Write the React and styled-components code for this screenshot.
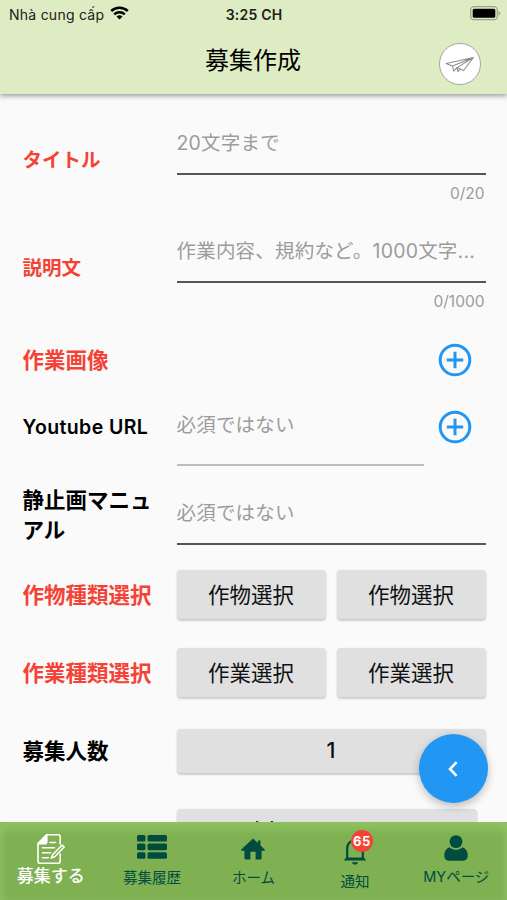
import React from 'react';
import styled, { createGlobalStyle } from 'styled-components';

// Colors //
const headerGreen = '#ddecc3';
const red = '#f44336';
const blue = '#2196f3';
const darkGreen = '#004d40';
const gray = '#9c9c9c';

// Styles //
const GlobalStyle = createGlobalStyle`
  * {
    box-sizing: border-box;
  }
  body {
    margin: 0;
    overflow: hidden;
    background-color: #fafafa;
    font-family: Inter, 'Noto Sans CJK JP', sans-serif;
    color: #000;
  }
`;

const ScreenStyled = styled.div`
  position: relative;
  width: 507px;
  height: 900px;
  display: flex;
  flex-direction: column;
  overflow: hidden;
`;

const HeaderStyled = styled.header`
  height: 94px;
  flex: none;
  background-color: ${headerGreen};
  box-shadow: 0 2px 5px rgba(0, 0, 0, 0.38);
  z-index: 2;
`;

const StatusBarStyled = styled.div`
  height: 28px;
  padding: 0 6px 0 9px;
  display: grid;
  grid-template-columns: 1fr auto 1fr;
  align-items: center;
  font-size: 14px;
  color: #1c2119;
`;

const CarrierStyled = styled.div`
  display: flex;
  align-items: center;
  gap: 6px;
  letter-spacing: 0.25px;
  svg {
    margin-top: -2px;
  }
`;

const ClockStyled = styled.div`
  font-size: 14px;
  font-weight: 600;
  letter-spacing: 0.2px;
  transform: translateX(-1px);
`;

const BatteryStyled = styled.svg`
  justify-self: end;
  margin-top: -2px;
`;

const TitleBarStyled = styled.div`
  height: 66px;
  padding: 2px 26px 0 25px;
  display: grid;
  grid-template-columns: 42px 1fr 42px;
  align-items: center;
`;

const TitleStyled = styled.h1`
  margin: -3px 0 0;
  font-size: 24px;
  font-weight: 400;
  line-height: 36px;
  text-align: center;
`;

const SendButtonStyled = styled.button`
  width: 42px;
  height: 42px;
  margin-top: 3px;
  padding: 0;
  display: flex;
  align-items: center;
  justify-content: center;
  background-color: white;
  border: 1px solid #a3a9a0;
  border-radius: 50%;
`;

const FormStyled = styled.main`
  flex: 1;
  min-height: 0;
  padding: 12px 21.5px 0 22.5px;
  overflow: hidden;
`;

const RowStyled = styled.div`
  height: ${({ height }) => height}px;
  margin-top: ${({ gap }) => gap || 0}px;
  display: grid;
  grid-template-columns: 138px 1fr;
  column-gap: 16px;
  align-items: center;
`;

const LabelStyled = styled.div`
  font-size: ${({ size }) => size || 21.5}px;
  line-height: 30px;
  font-weight: ${({ weight }) => weight || 700};
  letter-spacing: ${({ spacing }) => spacing || 0}px;
  color: ${({ required }) => (required ? red : '#000')};
  white-space: ${({ wrap }) => (wrap ? 'normal' : 'nowrap')};
`;

const FieldStyled = styled.div`
  align-self: start;
  flex: 1;
  padding-top: ${({ top }) => top}px;
  min-width: 0;
`;

const HintStyled = styled.div`
  height: ${({ height }) => height}px;
  border-bottom: 2px solid ${({ muted }) => (muted ? '#bdbdbd' : '#555')};
  font-size: 19.5px;
  line-height: 28px;
  font-weight: 400;
  letter-spacing: 0.2px;
  color: ${gray};
  white-space: nowrap;
`;

const CounterStyled = styled.div`
  padding: 8px 1px 0 0;
  font-size: 15.5px;
  line-height: 22px;
  text-align: right;
  color: ${gray};
`;

const ControlsStyled = styled.div`
  display: flex;
  align-items: center;
  justify-content: ${({ end }) => (end ? 'flex-end' : 'flex-start')};
  align-self: stretch;
  gap: ${({ gap }) => gap || 0}px;
`;

const AddButtonStyled = styled.button`
  width: 34px;
  height: 34px;
  flex: none;
  margin: 0 14px 0 0;
  padding: 0;
  border: 0;
  background: none;
  svg {
    display: block;
  }
`;

const SelectButtonStyled = styled.button`
  flex: 1;
  height: ${({ height }) => height || 49}px;
  margin-right: ${({ inset }) => inset || 0}px;
  padding: 0 0 2px;
  border: 0;
  border-radius: 4px;
  background-color: #e0e0e0;
  box-shadow: 0 2px 2px rgba(0, 0, 0, 0.17), 0 0 2px rgba(0, 0, 0, 0.08);
  font-family: inherit;
  font-size: 21.5px;
  font-weight: ${({ weight }) => weight || 400};
  color: #111;
`;

const DateButtonStyled = styled(SelectButtonStyled)`
  padding: 0 0 5px 78px;
  letter-spacing: 9.5px;
  text-align: left;
`;

const FabStyled = styled.button`
  position: absolute;
  left: 419px;
  top: 734px;
  width: 69px;
  height: 69px;
  padding: 0 1px 0 0;
  display: flex;
  align-items: center;
  justify-content: center;
  border: 0;
  border-radius: 50%;
  background-color: ${blue};
  box-shadow: 0 4px 8px rgba(0, 0, 0, 0.2), 0 1px 12px rgba(0, 0, 0, 0.06);
`;

const TabBarStyled = styled.nav`
  height: 78px;
  flex: none;
  display: grid;
  grid-template-columns: repeat(5, 1fr);
  background-color: #7fb052;
  box-shadow: inset 0 9px 9px -1px #8dc163, inset 5px 0 5px -1px #88bb5e,
    inset -4px 0 5px -1px #88bb5e;
  z-index: 2;
`;

const TabStyled = styled.div`
  display: flex;
  flex-direction: column;
  align-items: center;
  padding-top: ${({ top }) => top}px;
  color: ${({ active }) => (active ? 'white' : darkGreen)};
`;

const TabIconStyled = styled.div`
  position: relative;
  height: 30px;
  display: flex;
  align-items: center;
`;

const TabLabelStyled = styled.div`
  margin-top: ${({ top }) => top || 0}px;
  font-size: ${({ active }) => (active ? 17 : 14.5)}px;
  font-weight: ${({ active }) => (active ? 500 : 400)};
  line-height: 24px;
  white-space: nowrap;
`;

const BadgeStyled = styled.span`
  position: absolute;
  left: 8px;
  top: -6px;
  width: 22px;
  height: 22px;
  border-radius: 50%;
  background-color: ${red};
  color: white;
  font-size: 13px;
  font-weight: 700;
  line-height: 22px;
  letter-spacing: 0.4px;
  text-align: center;
`;

// Icons //
const WifiIcon = () => (
  <svg width="19" height="14" viewBox="0 0 19 14" fill="none" stroke="#000">
    <path d="M1.2 5a12 12 0 0 1 16.6 0" strokeWidth="2.5" />
    <path d="M4.2 8.3a7.7 7.7 0 0 1 10.6 0" strokeWidth="2.4" />
    <path d="M6.5 10.6a4.3 4.3 0 0 1 6 0L9.5 13.6z" fill="#000" stroke="none" />
  </svg>
);

const BatteryIcon = () => (
  <BatteryStyled width="31" height="15" viewBox="0 0 31 15">
    <rect x="0.7" y="0.7" width="26.6" height="13" rx="3.5" fill="none" stroke="#9aa58a" strokeWidth="1.3" />
    <rect x="2.7" y="2.7" width="22.6" height="9" rx="1.5" fill="#000" />
    <path d="M28.6 5v4.6c1-.4 1.7-1.3 1.7-2.3s-.7-1.9-1.7-2.3z" fill="#9aa58a" />
  </BatteryStyled>
);

const PlaneIcon = () => (
  <svg width="30" height="18" viewBox="0 0 30 18" fill="none" stroke="#8f8f8f" strokeWidth="1.1" strokeLinejoin="round">
    <path d="M28.5 2.5L1 8.5l6.5 2.6L28.5 2.5 18.5 15.5 12 12.6 28.5 2.5" />
    <path d="M7.5 11.1l1.3 5 3.2-3.5M12 12.6l1 4 2.4-2.6" />
  </svg>
);

const PlusCircleIcon = () => (
  <svg width="34" height="34" viewBox="0 0 34 34" fill="none" stroke={blue} strokeWidth="3">
    <circle cx="17" cy="17" r="14.8" />
    <path d="M17 8.8v16.4M8.8 17h16.4" />
  </svg>
);

const ChevronIcon = () => (
  <svg width="12" height="16" viewBox="0 0 12 16" fill="none" stroke="white" strokeWidth="2.6">
    <path d="M9.6 1.2L3 8l6.6 6.8" />
  </svg>
);

const NoteIcon = () => (
  <svg width="28" height="30" viewBox="0 0 28 30" fill="none" stroke="currentColor" strokeWidth="1.6" strokeLinejoin="round" strokeLinecap="round">
    <path d="M23.2 10V2.8c0-1.2-.8-2-2-2H9.5L1 9.5v17.7c0 1.2.8 2 2 2h18.2c1.2 0 2-.8 2-2V20" />
    <path d="M9.8.8v7c0 1.2-.8 2-2 2H1z" fill="currentColor" />
    <path d="M13 8.5h5.5M5.5 13.8h12M5.5 18.8h8M5.5 23.8h6" />
    <path d="M25.2 11l2 2-9.5 9.8-3.4 1.3 1.3-3.4z" />
  </svg>
);

const ListIcon = () => (
  <svg width="30" height="24" viewBox="0 0 30 24" fill="currentColor">
    {[0, 8.6, 17.2].map((y) => (
      <g key={y}>
        <rect x="0" y={y} width="8.5" height="6.6" rx="1.6" />
        <rect x="10.5" y={y} width="19.5" height="6.6" rx="1.6" />
      </g>
    ))}
  </svg>
);

const HomeIcon = () => (
  <svg width="24" height="22" viewBox="0 0 24 22" fill="currentColor">
    <path d="M12 .5L16.8 5V2.6h2.7v5L24 11.8l-.5.9h-2.9V20c0 .9-.5 1.4-1.4 1.4h-4.6v-7.6H9.4v7.6H4.8c-.9 0-1.4-.5-1.4-1.4v-7.3H.5l-.5-.9z" />
  </svg>
);

const BellIcon = () => (
  <svg width="24" height="28" viewBox="0 0 24 28" fill="none" stroke="currentColor" strokeWidth="2.2">
    <path d="M4.2 21.5V11a7.8 7.8 0 0 1 15.6 0v10.5" />
    <path d="M12 1v3" />
    <path d="M.6 23.4l2.6-3h17.6l2.6 3z" fill="currentColor" stroke="none" />
    <path d="M9 25.2h6c-.3 1.5-1.3 2.4-3 2.4s-2.7-.9-3-2.4z" fill="currentColor" stroke="none" />
  </svg>
);

const PersonIcon = () => (
  <svg width="24" height="26" viewBox="0 0 24 26" fill="currentColor">
    <circle cx="12" cy="6.6" r="6.4" />
    <path d="M5.4 12.2a9.4 9.4 0 0 0 13.2 0c3.2 1.2 5.2 4.2 5.2 8.4 0 3.3-1.6 5.2-4.6 5.2H4.8c-3 0-4.6-1.9-4.6-5.2 0-4.2 2-7.2 5.2-8.4z" />
  </svg>
);

// Components //
const Header = () => (
  <HeaderStyled>
    <StatusBarStyled>
      <CarrierStyled>
        Nhà cung cấp <WifiIcon />
      </CarrierStyled>
      <ClockStyled>3:25 CH</ClockStyled>
      <BatteryIcon />
    </StatusBarStyled>
    <TitleBarStyled>
      <span />
      <TitleStyled>募集作成</TitleStyled>
      <SendButtonStyled>
        <PlaneIcon />
      </SendButtonStyled>
    </TitleBarStyled>
  </HeaderStyled>
);

const AddButton = () => (
  <AddButtonStyled>
    <PlusCircleIcon />
  </AddButtonStyled>
);

const SelectRow = ({ label, option, gap }) => (
  <RowStyled height={49} gap={gap}>
    <LabelStyled required>{label}</LabelStyled>
    <ControlsStyled gap={11}>
      <SelectButtonStyled>{option}</SelectButtonStyled>
      <SelectButtonStyled>{option}</SelectButtonStyled>
    </ControlsStyled>
  </RowStyled>
);

const Form = () => (
  <FormStyled>
    <RowStyled height={108}>
      <LabelStyled required size={19.5}>タイトル</LabelStyled>
      <FieldStyled top={23}>
        <HintStyled height={46}>20文字まで</HintStyled>
        <CounterStyled>0/20</CounterStyled>
      </FieldStyled>
    </RowStyled>
    <RowStyled height={108}>
      <LabelStyled required size={19.5}>説明文</LabelStyled>
      <FieldStyled top={23}>
        <HintStyled height={46}>作業内容、規約など。1000文字...</HintStyled>
        <CounterStyled>0/1000</CounterStyled>
      </FieldStyled>
    </RowStyled>
    <RowStyled height={56} gap={10}>
      <LabelStyled required>作業画像</LabelStyled>
      <ControlsStyled end>
        <AddButton />
      </ControlsStyled>
    </RowStyled>
    <RowStyled height={78}>
      <LabelStyled size={19.5} weight={600} spacing={0.4}>Youtube URL</LabelStyled>
      <ControlsStyled gap={14}>
        <FieldStyled top={23}>
          <HintStyled height={55} muted>必須ではない</HintStyled>
        </FieldStyled>
        <AddButton />
      </ControlsStyled>
    </RowStyled>
    <RowStyled height={98}>
      <LabelStyled wrap="true">静止画マニュアル</LabelStyled>
      <FieldStyled top={33}>
        <HintStyled height={46}>必須ではない</HintStyled>
      </FieldStyled>
    </RowStyled>
    <SelectRow label="作物種類選択" option="作物選択" gap={6} />
    <SelectRow label="作業種類選択" option="作業選択" gap={29} />
    <RowStyled height={44} gap={32}>
      <LabelStyled>募集人数</LabelStyled>
      <SelectButtonStyled height={44} weight={500}>1</SelectButtonStyled>
    </RowStyled>
    <RowStyled height={44} gap={36}>
      <span />
      <DateButtonStyled height={44} inset={9}>ll</DateButtonStyled>
    </RowStyled>
  </FormStyled>
);

const TabBar = () => (
  <TabBarStyled>
    <TabStyled active top={12}>
      <TabIconStyled><NoteIcon /></TabIconStyled>
      <TabLabelStyled active>募集する</TabLabelStyled>
    </TabStyled>
    <TabStyled top={10}>
      <TabIconStyled><ListIcon /></TabIconStyled>
      <TabLabelStyled top={4}>募集履歴</TabLabelStyled>
    </TabStyled>
    <TabStyled top={12}>
      <TabIconStyled><HomeIcon /></TabIconStyled>
      <TabLabelStyled top={2}>ホーム</TabLabelStyled>
    </TabStyled>
    <TabStyled top={14}>
      <TabIconStyled>
        <BellIcon />
        <BadgeStyled>65</BadgeStyled>
      </TabIconStyled>
      <TabLabelStyled top={4}>通知</TabLabelStyled>
    </TabStyled>
    <TabStyled top={11}>
      <TabIconStyled><PersonIcon /></TabIconStyled>
      <TabLabelStyled top={2}>MYページ</TabLabelStyled>
    </TabStyled>
  </TabBarStyled>
);

const App = () => (
  <>
    <GlobalStyle />
    <ScreenStyled>
      <Header />
      <Form />
      <FabStyled>
        <ChevronIcon />
      </FabStyled>
      <TabBar />
    </ScreenStyled>
  </>
);

export default App;
